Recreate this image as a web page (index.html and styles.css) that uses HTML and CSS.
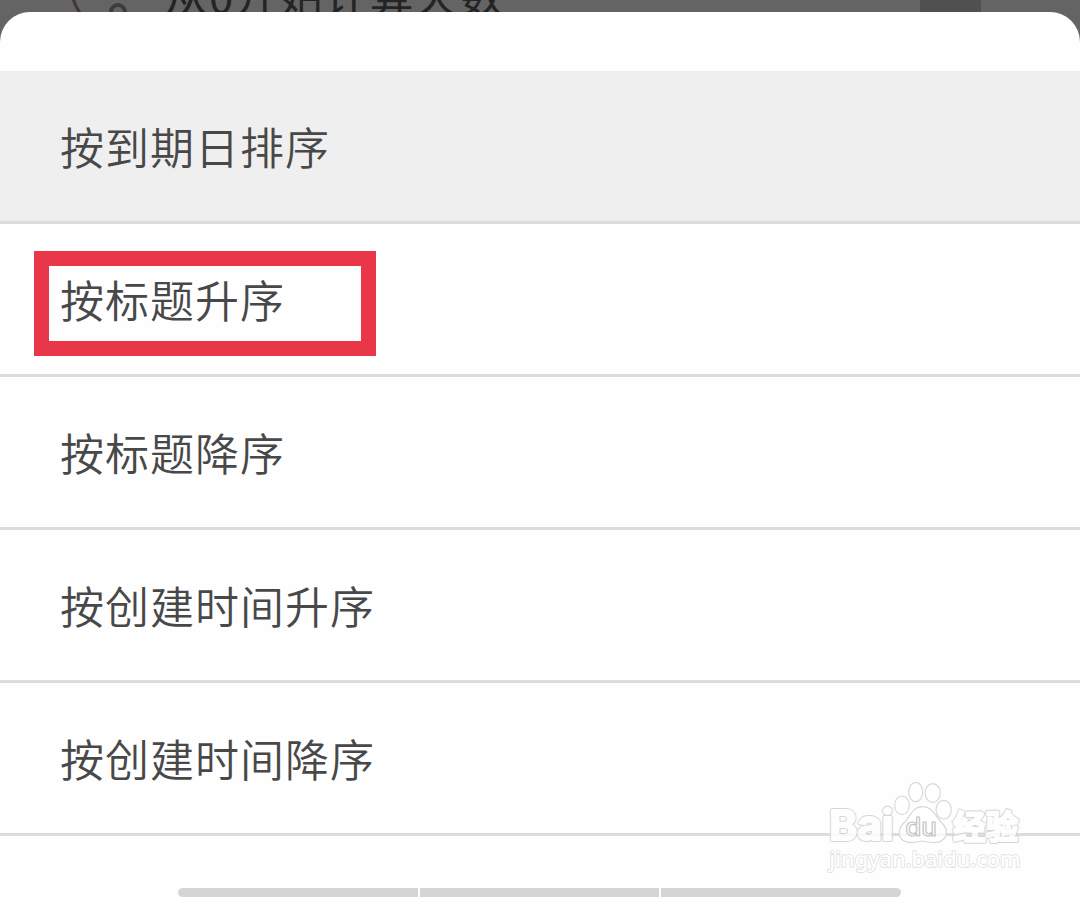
FILE: index.html
```html
<!DOCTYPE html>
<html lang="zh-CN">
<head>
	<meta charset="utf-8">
	<title>排序</title>
	<link rel="stylesheet" href="styles.css">
</head>
<body>

	<!-- dimmed settings row behind the sheet -->
	<div class="backdrop">
		<svg class="row-icon" width="80" height="12" viewBox="0 0 80 12">
			<path class="ring" d="M-1 -2Q1 6 6 13"/>
			<circle class="dot" cx="44" cy="12" r="7"/>
		</svg>
		<span class="row-label">从0开始计算天数</span>
		<span class="row-switch"></span>
	</div>

	<div class="sheet">
		<ul class="options">
			<li class="option selected"><span>按到期日排序</span></li>
			<li class="option marked"><span>按标题升序</span></li>
			<li class="option"><span>按标题降序</span></li>
			<li class="option"><span>按创建时间升序</span></li>
			<li class="option"><span>按创建时间降序</span></li>
		</ul>
		<div class="bar">
			<span></span>
			<span></span>
			<span></span>
		</div>
	</div>

	<svg class="watermark" width="230" height="127" viewBox="0 0 690 381">
		<defs>
			<g id="words">
				<text class="logo" x="58" y="211" textLength="192" lengthAdjust="spacingAndGlyphs" font-size="123">Bai</text>
				<text class="cjk" x="429" y="206" textLength="196" lengthAdjust="spacingAndGlyphs" font-size="98">经验</text>
			</g>
		</defs>
		<!-- grey edge first, white letters on top of it -->
		<g class="words">
			<use class="edge" href="#words"/>
			<use class="face" href="#words"/>
		</g>
		<ellipse cx="276" cy="106" rx="22" ry="28"/>
		<ellipse cx="317" cy="66" rx="21" ry="29"/>
		<ellipse cx="368" cy="69" rx="23" ry="28"/>
		<ellipse cx="401" cy="119" rx="23" ry="28"/>
		<path d="M338 110C310 110 302 135 287 153C270 168 264 183 270 200C279 222 310 219 338 213C366 219 396 224 407 199C415 181 404 166 391 153C374 135 366 110 338 110Z"/>
		<text class="du" x="286" y="199" textLength="95" lengthAdjust="spacingAndGlyphs" font-size="76">du</text>
		<text class="site" x="58" y="292" textLength="574" lengthAdjust="spacingAndGlyphs" font-size="66">jingyan.baidu.com</text>
	</svg>

</body>
</html>
```
FILE: styles.css
```css
body {
	margin: 0;
	height: 897px;
	overflow: hidden;
	background-color: #646464;
	color: #484848;
	font-family: "Noto Sans CJK SC", "Noto Sans", sans-serif;
}
.backdrop {
	display: flex;
	align-items: flex-end;
	height: 12px;
	overflow: hidden;
	padding-left: 74px;
}
.row-icon {
	flex: none;
	overflow: visible;
}
.row-icon .ring {
	fill: none;
	stroke: #403638;
	stroke-width: 3;
}
.row-icon .dot {
	fill: none;
	stroke: #3c3c3c;
	stroke-width: 4;
}
.row-label {
	flex: none;
	width: 756px;
	margin: 0 0 -12px 10px;
	font-size: 44px;
	line-height: 60px;
	letter-spacing: 1px;
	color: #242424;
}
.row-switch {
	width: 61px;
	height: 12px;
	background-color: #505050;
}
.sheet {
	height: 885px;
	border-radius: 30px 30px 0 0;
	background-color: #fefefe;
}
.options {
	margin: 0;
	padding: 59px 0 0;
	list-style: none;
}
.option {
	display: flex;
	align-items: center;
	box-sizing: border-box;
	height: 153px;
	padding: 0 0 0 60px;
	border-bottom: 3px solid #dcdcdc;
	font-size: 44px;
	line-height: 60px;
	letter-spacing: 1px;
	font-weight: 350;
}
.selected {
	background-color: #efefef;
}
.marked {
	padding: 8px 0 0 34px;
}
.marked span {
	box-sizing: border-box;
	width: 342px;
	height: 105px;
	padding: 3px 0 0 11px;
	border: 15px solid #e93649;
}
.bar {
	display: flex;
	gap: 2px;
	width: 723px;
	height: 9px;
	margin: 52px 0 0 178px;
	overflow: hidden;
	border-radius: 5px;
}
.bar span {
	flex: 1;
	background-color: #d5d5d5;
}
/* logo lies over the last rows */
.watermark {
	position: absolute;
	left: 810px;
	top: 770px;
	fill: #fff;
	fill-opacity: 0.8;
	stroke: #d8d8d8;
	stroke-width: 3.5;
	stroke-linejoin: round;
}
.watermark text {
	font-family: "Noto Sans", sans-serif;
	font-weight: bold;
}
.words {
	fill-opacity: 1;
	opacity: 0.85;
}
.edge {
	stroke: #d0d0d0;
	stroke-width: 12;
}
.face {
	stroke: #fff;
	stroke-width: 6;
}
.watermark .logo {
	font-family: Inter, sans-serif;
}
.watermark .du {
	fill: #fff;
	stroke: #c4c4c4;
	font-family: Inter, sans-serif;
	font-weight: 500;
}
.watermark .cjk {
	font-family: "Noto Sans CJK SC", sans-serif;
}
.watermark .site {
	fill-opacity: 1;
	stroke: #e0e0e0;
	stroke-width: 5;
	paint-order: stroke;
	font-weight: 500;
}
```
